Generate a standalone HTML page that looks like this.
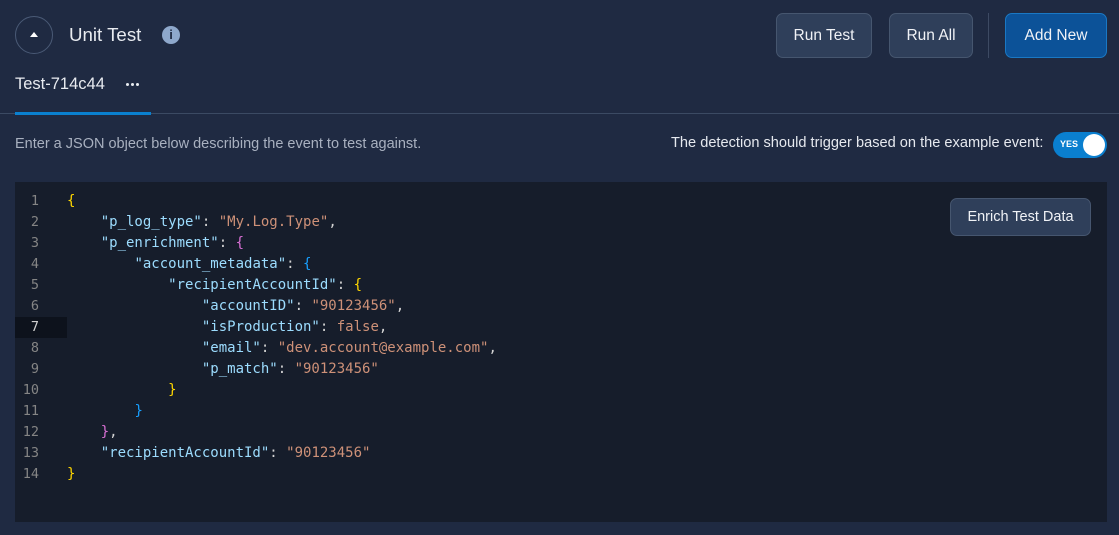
<!DOCTYPE html>
<html><head><style>
*{box-sizing:border-box;margin:0;padding:0}
body{width:1119px;height:535px;background:#1f2a42;font-family:"Liberation Sans",sans-serif;color:#e6e9ef;position:relative;overflow:hidden}
.abs{position:absolute}
.btn{position:absolute;top:13px;height:45px;border-radius:7px;background:#2f3f5a;border:1px solid #46566f;color:#f0f2f6;font-size:15.5px;display:flex;align-items:center;justify-content:center}
.code{position:absolute;left:15px;top:182px;width:1092px;height:340px;background:#161d2b}
.ln{position:absolute;left:0;width:52px;height:21px;text-align:right;padding-right:28px;font:13.5px "DejaVu Sans Mono",monospace;color:#858585;line-height:21px}
.cl{position:absolute;left:52px;height:21px;font:14px "DejaVu Sans Mono",monospace;line-height:21px;white-space:pre;color:#d4d4d4}
.k{color:#9cdcfe}.s{color:#ce9178}.y{color:#ffd700}.p{color:#da70d6}.b{color:#179fff}
.dot{position:absolute;top:83px;width:3px;height:3px;border-radius:50%;background:#e8ebf0}
</style></head><body>
<div class="abs" style="left:15px;top:16px;width:38px;height:38px;border-radius:50%;border:1px solid #4a5a76"></div>
<div class="abs" style="left:30px;top:32px;width:0;height:0;border-left:4px solid transparent;border-right:4px solid transparent;border-bottom:5px solid #fff"></div>
<div class="abs" style="left:69px;top:24px;font-size:18.7px;color:#e8ebf0">Unit Test</div>
<div class="abs" style="left:162px;top:26px;width:18px;height:18px;border-radius:50%;background:#8ea8cc;color:#1f2a42;font-weight:bold;font-size:13px;text-align:center;line-height:18px">i</div>
<div class="btn" style="left:776px;width:96px">Run Test</div>
<div class="btn" style="left:889px;width:84px">Run All</div>
<div class="abs" style="left:988px;top:13px;width:1px;height:45px;background:#3d4a63"></div>
<div class="btn" style="left:1005px;width:102px;background:#0c5298;border-color:#1a78c4">Add New</div>
<div class="abs" style="left:15px;top:75px;font-size:16.5px;color:#e8ebf0">Test-714c44</div>
<div class="dot" style="left:126px"></div><div class="dot" style="left:131px"></div><div class="dot" style="left:136px"></div>
<div class="abs" style="left:0;top:113px;width:1119px;height:1px;background:#3b4a63"></div>
<div class="abs" style="left:15px;top:112px;width:136px;height:3px;background:#0a80cf"></div>
<div class="abs" style="left:15px;top:136px;font-size:14.5px;color:#a9b1c0">Enter a JSON object below describing the event to test against.</div>
<div class="abs" style="left:671px;top:135px;font-size:14.6px;color:#e6e9ef">The detection should trigger based on the example event:</div>
<div class="abs" style="left:1053px;top:132px;width:54px;height:26px;border-radius:13px;background:#0a7fcf"></div>
<div class="abs" style="left:1060px;top:139px;font-size:9px;font-weight:bold;color:#fff">YES</div>
<div class="abs" style="left:1083px;top:134px;width:22px;height:22px;border-radius:50%;background:#fff"></div>
<div class="code">
<div class="abs" style="left:0;top:135px;width:52px;height:21px;background:#0d121c"></div>
<div class="ln" style="top:9px">1</div><div class="ln" style="top:30px">2</div><div class="ln" style="top:51px">3</div><div class="ln" style="top:72px">4</div><div class="ln" style="top:93px">5</div><div class="ln" style="top:114px">6</div><div class="ln" style="top:135px;color:#d0d0d0">7</div><div class="ln" style="top:156px">8</div><div class="ln" style="top:177px">9</div><div class="ln" style="top:198px">10</div><div class="ln" style="top:219px">11</div><div class="ln" style="top:240px">12</div><div class="ln" style="top:261px">13</div><div class="ln" style="top:282px">14</div>
<div class="cl" style="top:9px"><span class="y">{</span></div>
<div class="cl" style="top:30px">    <span class="k">"p_log_type"</span>: <span class="s">"My.Log.Type"</span>,</div>
<div class="cl" style="top:51px">    <span class="k">"p_enrichment"</span>: <span class="p">{</span></div>
<div class="cl" style="top:72px">        <span class="k">"account_metadata"</span>: <span class="b">{</span></div>
<div class="cl" style="top:93px">            <span class="k">"recipientAccountId"</span>: <span class="y">{</span></div>
<div class="cl" style="top:114px">                <span class="k">"accountID"</span>: <span class="s">"90123456"</span>,</div>
<div class="cl" style="top:135px">                <span class="k">"isProduction"</span>: <span class="s">false</span>,</div>
<div class="cl" style="top:156px">                <span class="k">"email"</span>: <span class="s">"dev.account@example.com"</span>,</div>
<div class="cl" style="top:177px">                <span class="k">"p_match"</span>: <span class="s">"90123456"</span></div>
<div class="cl" style="top:198px">            <span class="y">}</span></div>
<div class="cl" style="top:219px">        <span class="b">}</span></div>
<div class="cl" style="top:240px">    <span class="p">}</span>,</div>
<div class="cl" style="top:261px">    <span class="k">"recipientAccountId"</span>: <span class="s">"90123456"</span></div>
<div class="cl" style="top:282px"><span class="y">}</span></div>
<div class="abs" style="left:935px;top:16px;width:141px;height:38px;border-radius:7px;background:#2f3f5a;border:1px solid #46566f;color:#f0f2f6;font-size:14.5px;display:flex;align-items:center;justify-content:center">Enrich Test Data</div>
</div>
</body></html>
